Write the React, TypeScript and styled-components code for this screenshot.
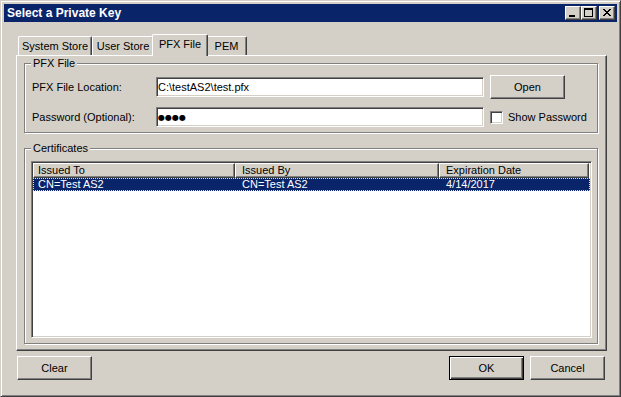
import React from "react";
import styled, { createGlobalStyle } from "styled-components";

const Global = createGlobalStyle`
  html, body { margin: 0; padding: 0; background: #d4d0c8; }
  body { font-family: "Liberation Sans", Arial, sans-serif; font-size: 11px; color: #000; }
  * { box-sizing: border-box; }
`;

const Window = styled.div`
  width: 621px;
  height: 397px;
  display: flex;
  flex-direction: column;
  background: #d4d0c8;
  border: 1px solid;
  border-color: #d4d0c8 #404040 #404040 #d4d0c8;
  box-shadow: inset 1px 1px #fff, inset -1px -1px #808080;
  padding: 3px;
`;

const TitleBar = styled.div`
  height: 18px;
  flex: none;
  display: flex;
  align-items: center;
  justify-content: space-between;
  padding: 0 2px 0 3px;
  background: #0a246a;
  color: #fff;
`;

const TitleText = styled.span`
  font-family: "Liberation Sans", Arial, sans-serif;
  font-weight: bold;
  font-size: 12px;
  line-height: 14px;
`;

const CaptionButtons = styled.div`
  display: flex;
  align-items: center;
`;

const CaptionButton = styled.div<{ $gap?: number }>`
  width: 16px;
  height: 14px;
  margin-left: ${(p) => p.$gap ?? 0}px;
  background: #d4d0c8;
  border: 1px solid;
  border-color: #fff #404040 #404040 #fff;
  box-shadow: inset -1px -1px #808080;
  display: flex;
  svg { display: block; }
`;

const Body = styled.div`
  flex: 1;
  display: flex;
  flex-direction: column;
  padding: 12px 10px 13px 12px;
  min-height: 0;
`;

const TabStrip = styled.div`
  height: 21px;
  flex: none;
  display: flex;
  align-items: flex-end;
  padding-left: 2px;
  position: relative;
  z-index: 1;
`;

const Tab = styled.div<{ $w: number; $active?: boolean }>`
  width: ${(p) => p.$w}px;
  height: ${(p) => (p.$active ? 22 : 19)}px;
  margin: 0 ${(p) => (p.$active ? -2 : 0)}px ${(p) => (p.$active ? -1 : 0)}px;
  position: relative;
  z-index: ${(p) => (p.$active ? 2 : 1)};
  background: #d4d0c8;
  border-top: 1px solid #fff;
  border-left: 1px solid #fff;
  border-right: 1px solid #404040;
  box-shadow: inset -1px 0 #808080;
  border-radius: 2px 2px 0 0;
  padding-top: 3px;
  line-height: 13px;
  text-align: center;
  white-space: nowrap;
`;

const Panel = styled.div`
  flex: 1;
  display: flex;
  flex-direction: column;
  gap: 15px;
  border: 1px solid;
  border-color: #fff #404040 #404040 #fff;
  box-shadow: inset -1px -1px #808080;
  padding: 7px 8px 6px 7px;
  min-height: 0;
`;

const GroupBox = styled.div<{ $grow?: boolean }>`
  position: relative;
  border: 1px solid #808080;
  box-shadow: inset 1px 1px #fff, 1px 1px #fff;
  flex: ${(p) => (p.$grow ? "1" : "none")};
  display: flex;
  flex-direction: column;
  min-height: 0;
`;

const GroupTitle = styled.span`
  position: absolute;
  top: -7px;
  left: 6px;
  padding: 0 2px;
  line-height: 13px;
  background: #d4d0c8;
`;

const FormGrid = styled.div`
  display: grid;
  grid-template-columns: 118px 328px 75px;
  grid-template-rows: 24px 20px;
  column-gap: 6px;
  row-gap: 8px;
  align-items: center;
  padding: 11px 0 5px 7px;
`;

const FieldLabel = styled.span`
  line-height: 13px;
  white-space: nowrap;
`;

const TextBox = styled.input<{ $dots?: boolean }>`
  width: 100%;
  height: 20px;
  margin: 0;
  padding: 0 1px;
  background: #fff;
  border: 1px solid;
  border-color: #808080 #fff #fff #808080;
  box-shadow: inset 1px 1px #404040, inset -1px -1px #d4d0c8;
  border-radius: 0;
  outline: none;
  color: #000;
  font-family: ${(p) => (p.$dots ? '"DejaVu Sans", sans-serif' : '"Liberation Sans", Arial, sans-serif')};
  font-size: ${(p) => (p.$dots ? "8px" : "11px")};
`;

const Button = styled.button<{ $default?: boolean }>`
  width: 75px;
  height: 24px;
  margin: 0;
  padding: 0;
  background: #d4d0c8;
  font-family: "Liberation Sans", Arial, sans-serif;
  font-size: 11px;
  color: #000;
  border-radius: 0;
  border: 1px solid;
  border-color: ${(p) => (p.$default ? "#000" : "#fff #404040 #404040 #fff")};
  box-shadow: ${(p) =>
    p.$default
      ? "inset 1px 1px #fff, inset -1px -1px #404040, inset -2px -2px #808080"
      : "inset -1px -1px #808080"};
`;

const CheckRow = styled.label`
  display: flex;
  align-items: center;
  gap: 5px;
  white-space: nowrap;
  line-height: 13px;
`;

const CheckBox = styled.span`
  width: 13px;
  height: 13px;
  flex: none;
  background: #fff;
  border: 1px solid;
  border-color: #808080 #fff #fff #808080;
  box-shadow: inset 1px 1px #404040, inset -1px -1px #d4d0c8;
`;

const CertInner = styled.div`
  flex: 1;
  display: flex;
  flex-direction: column;
  padding: 12px 5px 5px 6px;
  min-height: 0;
`;

const ListView = styled.div`
  flex: 1;
  background: #fff;
  border: 1px solid;
  border-color: #808080 #fff #fff #808080;
  box-shadow: inset 1px 1px #404040, inset -1px -1px #d4d0c8;
  padding: 1px;
  display: flex;
  flex-direction: column;
  min-height: 0;
`;

const COLS = "202px 204px 150px";

const HeaderRow = styled.div`
  display: grid;
  grid-template-columns: ${COLS};
  height: 15px;
  flex: none;
`;

const HeaderCell = styled.div<{ $pad: number }>`
  background: #d4d0c8;
  border: 1px solid;
  border-color: #fff #404040 #404040 #fff;
  box-shadow: inset -1px -1px #808080;
  padding-left: ${(p) => p.$pad}px;
  line-height: 12px;
  white-space: nowrap;
  overflow: hidden;
`;

const DataRow = styled.div<{ $selected?: boolean }>`
  display: grid;
  grid-template-columns: ${COLS};
  height: 13px;
  line-height: 13px;
  background: ${(p) => (p.$selected ? "#0a246a" : "transparent")};
  color: ${(p) => (p.$selected ? "#fff" : "#000")};
  outline: ${(p) => (p.$selected ? "1px dotted #e8e4c8" : "none")};
  outline-offset: -1px;
`;

const DataCell = styled.div<{ $pad: number }>`
  padding-left: ${(p) => p.$pad}px;
  white-space: nowrap;
  overflow: hidden;
`;

const ButtonRow = styled.div`
  flex: none;
  display: flex;
  gap: 6px;
  margin-top: 5px;
  padding: 0 2px 0 1px;
`;

const Spacer = styled.div`
  flex: 1;
`;

const MinIcon = () => (
  <svg width="14" height="12" viewBox="0 0 14 12" shapeRendering="crispEdges">
    <rect x="3" y="8" width="6" height="2" fill="#000" />
  </svg>
);

const MaxIcon = () => (
  <svg width="14" height="12" viewBox="0 0 14 12" shapeRendering="crispEdges">
    <rect x="2" y="1" width="9" height="2" fill="#000" />
    <rect x="2" y="1" width="1" height="9" fill="#000" />
    <rect x="10" y="1" width="1" height="9" fill="#000" />
    <rect x="2" y="9" width="9" height="1" fill="#000" />
  </svg>
);

const CloseIcon = () => {
  const rows = [0, 1, 2, 3, 4, 5, 6];
  return (
    <svg width="14" height="12" viewBox="0 0 14 12" shapeRendering="crispEdges">
      {rows.map((i) => {
        const d = i <= 3 ? i : 6 - i;
        return (
          <g key={i} fill="#000">
            <rect x={3 + d} y={2 + i} width="2" height="1" />
            <rect x={9 - d} y={2 + i} width="2" height="1" />
          </g>
        );
      })}
    </svg>
  );
};

const tabs = [
  { label: "System Store", w: 74 },
  { label: "User Store", w: 62 },
  { label: "PFX File", w: 56, active: true },
  { label: "PEM", w: 41 },
];

const headers = ["Issued To", "Issued By", "Expiration Date"];
const pads = [4, 6, 6];
const certs = [{ to: "CN=Test AS2", by: "CN=Test AS2", exp: "4/14/2017", selected: true }];

export default function App() {
  return (
    <>
      <Global />
      <Window>
        <TitleBar>
          <TitleText>Select a Private Key</TitleText>
          <CaptionButtons>
            <CaptionButton>
              <MinIcon />
            </CaptionButton>
            <CaptionButton>
              <MaxIcon />
            </CaptionButton>
            <CaptionButton $gap={2}>
              <CloseIcon />
            </CaptionButton>
          </CaptionButtons>
        </TitleBar>
        <Body>
          <TabStrip>
            {tabs.map((t) => (
              <Tab key={t.label} $w={t.w} $active={t.active}>
                {t.label}
              </Tab>
            ))}
          </TabStrip>
          <Panel>
            <GroupBox>
              <GroupTitle>PFX File</GroupTitle>
              <FormGrid>
                <FieldLabel>PFX File Location:</FieldLabel>
                <TextBox readOnly value={"C:\\testAS2\\test.pfx"} />
                <Button>Open</Button>
                <FieldLabel>Password (Optional):</FieldLabel>
                <TextBox readOnly $dots value={"●●●●"} />
                <CheckRow>
                  <CheckBox />
                  Show Password
                </CheckRow>
              </FormGrid>
            </GroupBox>
            <GroupBox $grow>
              <GroupTitle>Certificates</GroupTitle>
              <CertInner>
                <ListView>
                  <HeaderRow>
                    {headers.map((h, i) => (
                      <HeaderCell key={h} $pad={pads[i]}>
                        {h}
                      </HeaderCell>
                    ))}
                  </HeaderRow>
                  {certs.map((c) => (
                    <DataRow key={c.to} $selected={c.selected}>
                      <DataCell $pad={5}>{c.to}</DataCell>
                      <DataCell $pad={7}>{c.by}</DataCell>
                      <DataCell $pad={7}>{c.exp}</DataCell>
                    </DataRow>
                  ))}
                </ListView>
              </CertInner>
            </GroupBox>
          </Panel>
          <ButtonRow>
            <Button>Clear</Button>
            <Spacer />
            <Button $default>OK</Button>
            <Button>Cancel</Button>
          </ButtonRow>
        </Body>
      </Window>
    </>
  );
}
